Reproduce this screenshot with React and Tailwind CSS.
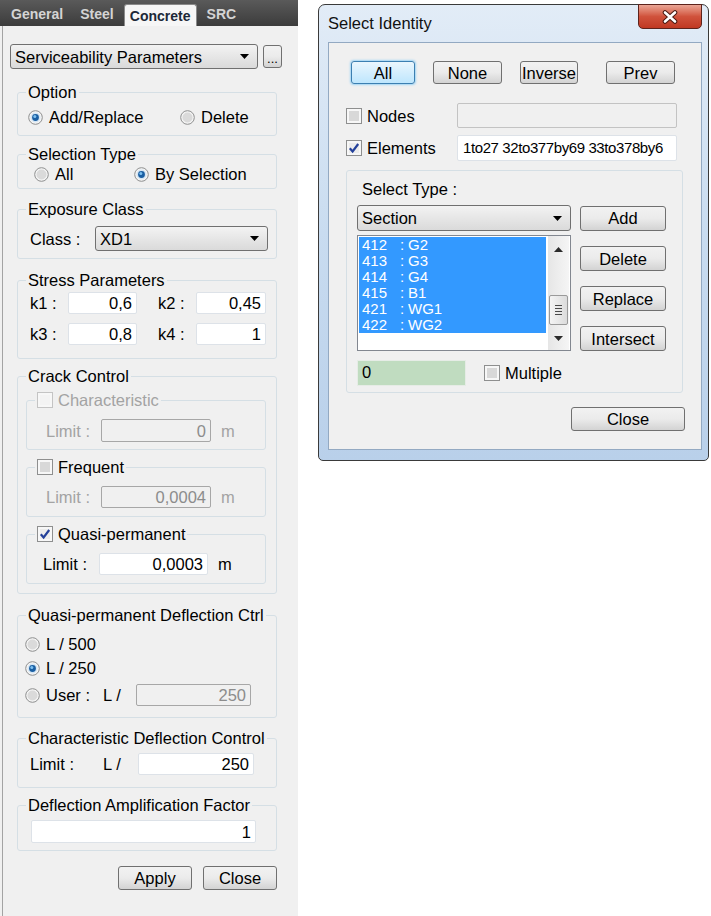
import React from 'react';

const Radio = ({ checked }) => (
  <svg width="15" height="15" viewBox="0 0 15 15" className="shrink-0">
    <circle cx="7.5" cy="7.5" r="6.8" fill="#f4f4f4" stroke="#8e8f8f" strokeWidth="1" />
    <circle cx="7.5" cy="7.5" r="5" fill={checked ? '#d6e6f3' : '#dadada'} />
    {checked && <circle cx="7.5" cy="7.5" r="3.4" fill="#1a5fa3" />}
    {checked && <circle cx="6.8" cy="6.6" r="1.5" fill="#7cc0f0" />}
  </svg>
);

const Check = ({ checked, disabled }) => (
  <svg width="16" height="16" viewBox="0 0 16 16" className="shrink-0">
    <rect x="0.5" y="0.5" width="15" height="15" fill="#f7f7f7" stroke={disabled ? '#c4c4c4' : '#8e8f8f'} />
    <rect x="3" y="3" width="10" height="10" fill={disabled ? '#f3f3f3' : checked ? '#ececec' : '#d8d8d8'} />
    {checked && <path d="M3.8 8.2 L6.6 11.4 L12.2 4" fill="none" stroke="#23409a" strokeWidth="2.2" />}
  </svg>
);

const Field = ({ value, className, disabled, left }) => (
  <div
    className={`flex items-center overflow-hidden whitespace-nowrap rounded-[2px] border ${
      left ? 'justify-start pl-[5px]' : 'justify-end pr-[4px]'
    } ${disabled ? 'border-[#a7a7a7] bg-[#f0f0f0] text-[#8c8c8c]' : 'border-[#dde2e8] bg-white text-black'} ${className}`}
  >
    {value}
  </div>
);

const Combo = ({ text, className }) => (
  <div
    className={`flex items-center justify-between rounded-[3px] border border-[#707070] bg-linear-to-b from-[#f3f3f3] to-[#dadada] pl-[4px] pr-[8px] ${className}`}
  >
    <span>{text}</span>
    <svg width="9" height="5" viewBox="0 0 9 5">
      <path d="M0 0 H9 L4.5 5 Z" fill="#000" />
    </svg>
  </div>
);

const Btn = ({ children, className }) => (
  <button
    type="button"
    className={`flex items-center justify-center rounded-[3px] border border-[#707070] bg-linear-to-b from-[#f2f2f2] via-[#ebebeb] to-[#d3d3d3] text-black ${className}`}
  >
    {children}
  </button>
);

const Group = ({ title, className, bodyClass, children }) => (
  <fieldset className={`rounded-[3px] border border-[#d5dfe5] ${className}`}>
    <legend className="ml-[8px] px-[2px] leading-[18px]">{title}</legend>
    <div className={bodyClass}>{children}</div>
  </fieldset>
);

const Opt = ({ checked, label, className = '' }) => (
  <div className={`flex h-[18px] items-center gap-[6px] ${className}`}>
    <Radio checked={checked} />
    <span>{label}</span>
  </div>
);

const TabBar = () => (
  <div className="flex h-[26px] items-end bg-linear-to-b from-[#5a5a5a] to-[#3c3c3c] pl-[11px] text-[14px] font-bold leading-[16px] text-[#d4d4d4]">
    <span className="mb-[4px]">General</span>
    <span className="mb-[4px] ml-[17px]">Steel</span>
    <div className="ml-[10px] flex h-[22px] w-[73px] items-center justify-center rounded-t-[3px] border border-b-0 border-[#8a8a8a] bg-[#f6f6f6] pt-[1px] text-[#1c2838]">
      Concrete
    </div>
    <span className="mb-[4px] ml-[10px]">SRC</span>
  </div>
);

const CrackSub = ({ title, checked, disabled, titleDisabled, value, className, bodyClass, labelClass, fieldClass, unitClass }) => (
  <fieldset className={`rounded-[3px] border border-[#d5dfe5] ${className}`}>
    <legend className="ml-[8px] px-[2px] leading-[18px]">
      <span className={`flex items-center gap-[5px] ${titleDisabled ? 'text-[#a3a3a3]' : 'text-black'}`}>
        <Check checked={checked} disabled={titleDisabled} />
        {title}
      </span>
    </legend>
    <div className={`flex items-center ${bodyClass}`}>
      <span className={labelClass}>Limit :</span>
      <Field value={value} disabled={disabled} className={fieldClass} />
      <span className={unitClass}>m</span>
    </div>
  </fieldset>
);

const LeftPanel = () => (
  <div className="flex h-[916px] w-[298px] shrink-0 flex-col bg-[#f0f0f0]">
    <TabBar />
    <div className="ml-[2px] flex-1 border-l border-[#a3a3a3] pl-[7px] pt-[18px]">
      <div className="flex items-center">
        <Combo text="Serviceability Parameters" className="h-[25px] w-[248px]" />
        <Btn className="ml-[5px] h-[23px] w-[19px] items-end pb-[3px] text-[13px] leading-[10px]">...</Btn>
      </div>

      <Group title="Option" className="ml-[7px] mt-[14px] w-[260px]" bodyClass="flex items-center pb-[9px] pl-[10px] pt-[7px]">
        <Opt checked label="Add/Replace" className="w-[152px]" />
        <Opt label="Delete" />
      </Group>

      <Group title="Selection Type" className="ml-[7px] mt-[9px] w-[260px]" bodyClass="flex items-center pb-[5px] pl-[16px] pt-[2px]">
        <Opt label="All" className="w-[100px]" />
        <Opt checked label="By Selection" />
      </Group>

      <Group title="Exposure Class" className="ml-[7px] mt-[11px] w-[260px]" bodyClass="flex items-center pb-[7px] pl-[12px] pt-[8px]">
        <span className="w-[65px]">Class :</span>
        <Combo text="XD1" className="h-[25px] w-[173px]" />
      </Group>

      <Group title="Stress Parameters" className="ml-[7px] mt-[12px] w-[260px]" bodyClass="flex flex-col gap-[9px] pb-[13px] pl-[12px] pt-[3px]">
        <div className="flex items-center">
          <span className="w-[38px]">k1 :</span>
          <Field value="0,6" className="h-[22px] w-[69px]" />
          <span className="ml-[21px] w-[38px]">k2 :</span>
          <Field value="0,45" className="h-[22px] w-[70px]" />
        </div>
        <div className="flex items-center">
          <span className="w-[38px]">k3 :</span>
          <Field value="0,8" className="h-[22px] w-[69px]" />
          <span className="ml-[21px] w-[38px]">k4 :</span>
          <Field value="1" className="h-[22px] w-[70px]" />
        </div>
      </Group>

      <Group title="Crack Control" className="ml-[7px] mt-[8px] w-[260px]" bodyClass="pb-[9px] pl-[8px] pt-[6px]">
        <CrackSub
          title="Characteristic"
          titleDisabled
          disabled
          value="0"
          className="w-[240px]"
          bodyClass="pb-[7px] pl-[19px] pt-[10px] text-[#a3a3a3]"
          labelClass="w-[55px]"
          fieldClass="h-[23px] w-[110px]"
          unitClass="ml-[10px]"
        />
        <CrackSub
          title="Frequent"
          disabled
          value="0,0004"
          className="mt-[8px] w-[240px]"
          bodyClass="pb-[8px] pl-[19px] pt-[10px] text-[#a3a3a3]"
          labelClass="w-[55px]"
          fieldClass="h-[22px] w-[110px]"
          unitClass="ml-[10px]"
        />
        <CrackSub
          title="Quasi-permanent"
          checked
          value="0,0003"
          className="mt-[8px] w-[240px]"
          bodyClass="pb-[8px] pl-[16px] pt-[10px] text-black"
          labelClass="w-[56px]"
          fieldClass="h-[22px] w-[109px]"
          unitClass="ml-[10px]"
        />
      </Group>

      <Group title="Quasi-permanent Deflection Ctrl" className="ml-[7px] mt-[12px] w-[260px]" bodyClass="flex flex-col pb-[11px] pl-[7px] pt-[11px]">
        <Opt label="L / 500" />
        <Opt checked label="L / 250" className="mt-[6px]" />
        <div className="mt-[7px] flex h-[22px] items-center">
          <Radio />
          <span className="ml-[6px] w-[57px]">User :</span>
          <span className="w-[33px]">L /</span>
          <Field value="250" disabled className="h-[22px] w-[115px]" />
        </div>
      </Group>

      <Group title="Characteristic Deflection Control" className="ml-[7px] mt-[11px] w-[260px]" bodyClass="flex items-center pb-[12px] pl-[12px] pt-[6px]">
        <span className="w-[73px]">Limit :</span>
        <span className="w-[35px]">L /</span>
        <Field value="250" className="h-[22px] w-[116px]" />
      </Group>

      <Group title="Deflection Amplification Factor" className="ml-[7px] mt-[8px] w-[260px]" bodyClass="pb-[7px] pl-[13px] pt-[6px]">
        <Field value="1" className="h-[23px] w-[225px]" />
      </Group>

      <div className="ml-[7px] mt-[15px] flex w-[260px] justify-end gap-[11px]">
        <Btn className="h-[24px] w-[74px]">Apply</Btn>
        <Btn className="h-[24px] w-[74px]">Close</Btn>
      </div>
    </div>
  </div>
);

const items = [
  ['412', 'G2'],
  ['413', 'G3'],
  ['414', 'G4'],
  ['415', 'B1'],
  ['421', 'WG1'],
  ['422', 'WG2'],
];

const ListBox = () => (
  <div className="flex h-[116px] w-[214px] border border-[#828790] bg-white px-[1px]">
    <div className="w-[187px] pt-[1px] text-[15px] leading-[16px] text-white">
      {items.map(([n, name]) => (
        <div key={n} className="flex h-[16px] bg-[#3399ff] pl-[3px]">
          <span className="w-[38px]">{n}</span>
          <span className="w-[8px]">:</span>
          <span>{name}</span>
        </div>
      ))}
    </div>
    <div className="ml-[2px] flex w-[21px] flex-col bg-linear-to-r from-[#e6e6e6] to-[#f5f5f5]">
      <div className="flex h-[24px] items-center justify-center pt-[2px]">
        <svg width="9" height="5" viewBox="0 0 9 5">
          <path d="M0 5 H9 L4.5 0 Z" fill="#2b2b2b" />
        </svg>
      </div>
      <div className="mx-[1px] mt-[35px] flex h-[30px] flex-col items-center justify-center gap-[2px] rounded-[2px] border border-[#9a9a9a] bg-linear-to-r from-[#f4f4f4] to-[#dcdcdc]">
        <div className="h-px w-[7px] bg-[#4a4a4a]" />
        <div className="h-px w-[7px] bg-[#4a4a4a]" />
        <div className="h-px w-[7px] bg-[#4a4a4a]" />
        <div className="h-px w-[7px] bg-[#4a4a4a]" />
      </div>
      <div className="flex-1" />
      <div className="flex h-[24px] items-center justify-center">
        <svg width="9" height="5" viewBox="0 0 9 5">
          <path d="M0 0 H9 L4.5 5 Z" fill="#2b2b2b" />
        </svg>
      </div>
    </div>
  </div>
);

const Dialog = () => (
  <div className="ml-[20px] mt-[4px] flex h-[457px] w-[391px] shrink-0 flex-col rounded-t-[7px] rounded-b-[5px] border border-[#3a3a3a] bg-linear-to-b from-[#e2ecf7] via-[#c9dcf0] to-[#b9d0ea] pb-[10px] pl-[9px] pr-[6px]">
    <div className="flex h-[37px] items-start">
      <span className="mt-[9px] leading-[18px] text-[#111]">Select Identity</span>
      <div className="-mt-px ml-auto flex h-[25px] w-[64px] items-center justify-center rounded-b-[5px] border border-[#5d231c] bg-linear-to-b from-[#eaa696] via-[#d0523c] to-[#c03822]">
        <svg width="18" height="14" viewBox="0 0 18 14">
          <path d="M4 2.5 L14 11.5 M14 2.5 L4 11.5" stroke="#4a1a12" strokeWidth="4.6" strokeLinecap="round" />
          <path d="M4 2.5 L14 11.5 M14 2.5 L4 11.5" stroke="#fff" strokeWidth="2.6" strokeLinecap="round" />
        </svg>
      </div>
    </div>
    <div className="flex flex-1 flex-col border border-[#93a9c2] bg-[#f0f0f0]">
      <div className="flex items-center pl-[22px] pt-[18px]">
        <button
          type="button"
          className="flex h-[23px] w-[64px] items-center justify-center rounded-[3px] border border-[#3c7fb1] bg-linear-to-b from-[#eaf6fd] to-[#bee6fd] shadow-[0_0_2px_1px_#9fd4f4]"
        >
          All
        </button>
        <Btn className="ml-[18px] h-[23px] w-[69px]">None</Btn>
        <Btn className="ml-[18px] h-[23px] w-[58px]">Inverse</Btn>
        <Btn className="ml-[28px] h-[23px] w-[69px]">Prev</Btn>
      </div>

      <div className="ml-[17px] mt-[19px] flex items-center">
        <div className="flex w-[111px] items-center gap-[5px]">
          <Check />
          <span>Nodes</span>
        </div>
        <div className="h-[25px] w-[220px] rounded-[2px] border border-[#c3c3c3] bg-[#f0f0f0]" />
      </div>
      <div className="ml-[17px] mt-[7px] flex items-center">
        <div className="flex w-[111px] items-center gap-[5px]">
          <Check checked />
          <span>Elements</span>
        </div>
        <Field left value="1to27 32to377by69 33to378by6" className="h-[26px] w-[220px] text-[15px] tracking-[-0.4px]" />
      </div>

      <div className="ml-[17px] mt-[9px] w-[337px] rounded-[3px] border border-[#d5dfe5] pb-[6px] pl-[10px] pt-[9px]">
        <div className="pl-[5px] leading-[18px]">Select Type :</div>
        <div className="mt-[7px] flex items-center">
          <Combo text="Section" className="h-[26px] w-[214px]" />
          <Btn className="ml-[9px] h-[25px] w-[86px]">Add</Btn>
        </div>
        <div className="mt-[4px] flex">
          <ListBox />
          <div className="ml-[9px] flex flex-col">
            <Btn className="mt-[11px] h-[25px] w-[86px]">Delete</Btn>
            <Btn className="mt-[15px] h-[25px] w-[86px]">Replace</Btn>
            <Btn className="mt-[15px] h-[25px] w-[86px]">Intersect</Btn>
          </div>
        </div>
        <div className="mt-[9px] flex items-center">
          <div className="h-[26px] w-[109px] border border-[#e6ece6] bg-[#c0dcc0] pl-[4px] pt-px leading-[20px]">0</div>
          <div className="ml-[18px] flex items-center gap-[5px]">
            <Check />
            <span>Multiple</span>
          </div>
        </div>
      </div>

      <div className="mr-[16px] mt-[14px] flex justify-end">
        <Btn className="h-[24px] w-[114px]">Close</Btn>
      </div>
    </div>
  </div>
);

export default function App() {
  return (
    <div className="flex min-h-[916px] w-[711px] items-start bg-white font-['Liberation_Sans',Arial,sans-serif] text-[16.5px] leading-[18px] text-black">
      <LeftPanel />
      <Dialog />
    </div>
  );
}
